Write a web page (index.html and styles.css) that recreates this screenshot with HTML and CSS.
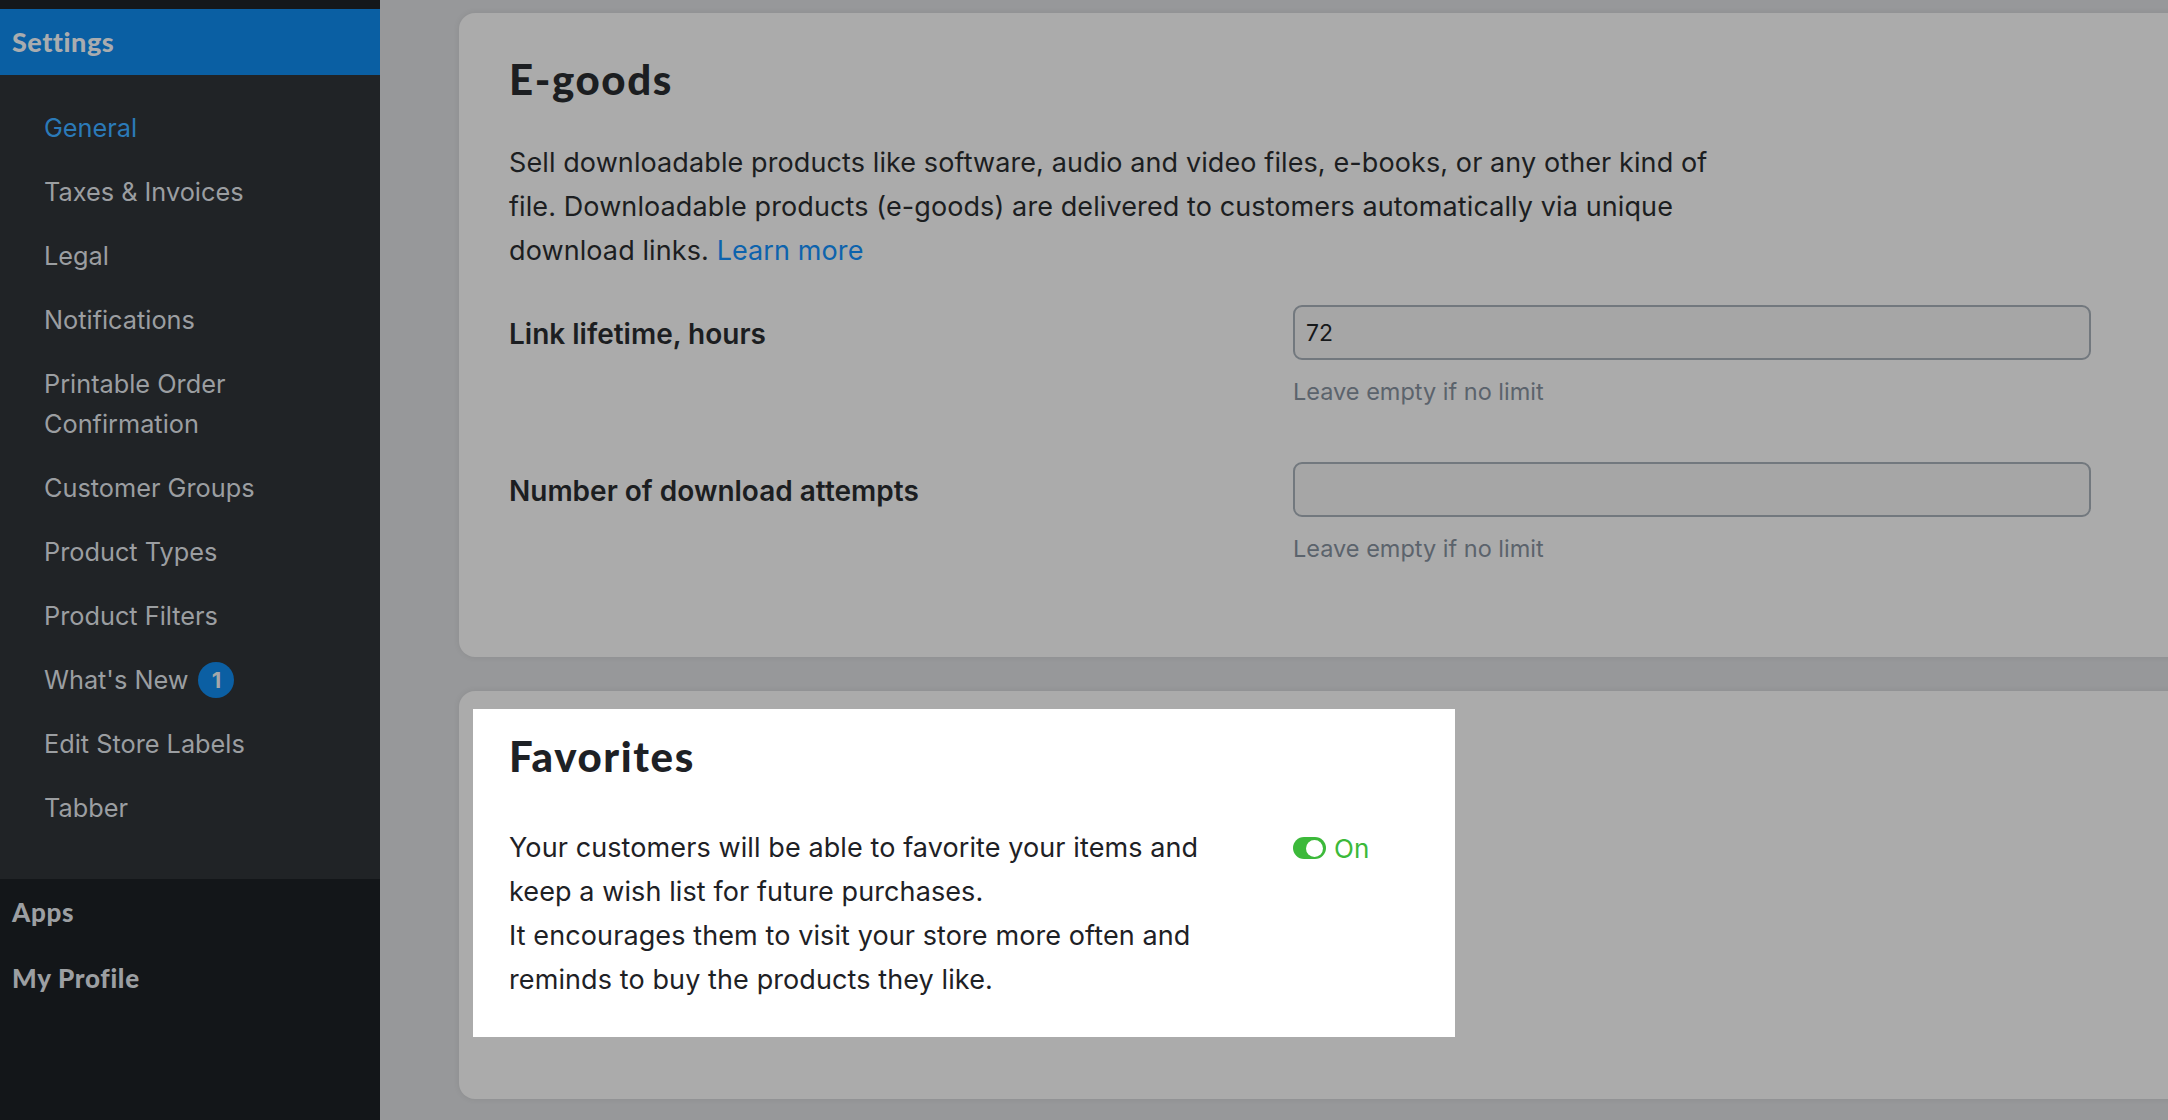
FILE: index.html
```html
<!DOCTYPE html>
<html lang="en">
<head>
<meta charset="utf-8">
<title>Settings – E-goods</title>
<link rel="stylesheet" href="styles.css">
</head>
<body>
<div class="app">
  <aside class="sidebar">
    <div class="topbar"></div>
    <div class="section-head">Settings</div>
    <ul class="submenu">
      <li class="active">General</li>
      <li>Taxes &amp; Invoices</li>
      <li>Legal</li>
      <li>Notifications</li>
      <li>Printable Order<br>Confirmation</li>
      <li>Customer Groups</li>
      <li>Product Types</li>
      <li>Product Filters</li>
      <li>What's New <span class="badge">1</span></li>
      <li>Edit Store Labels</li>
      <li>Tabber</li>
    </ul>
    <ul class="mainmenu">
      <li>Apps</li>
      <li>My Profile</li>
    </ul>
  </aside>
  <main class="content">
    <section class="card">
      <h2 class="card-title">E-goods</h2>
      <p class="desc">Sell downloadable products like software, audio and video files, e-books, or any other kind of<br>file. Downloadable products (e-goods) are delivered to customers automatically via unique<br>download links. <a class="link" href="#">Learn more</a></p>
      <div class="field">
        <label class="field-label">Link lifetime, hours</label>
        <div class="field-control">
          <div class="input">72</div>
          <div class="hint">Leave empty if no limit</div>
        </div>
      </div>
      <div class="field field-second">
        <label class="field-label">Number of download attempts</label>
        <div class="field-control">
          <div class="input"></div>
          <div class="hint">Leave empty if no limit</div>
        </div>
      </div>
    </section>
    <section class="card card-fav">
      <div class="spotlight">
        <h2 class="card-title">Favorites</h2>
        <div class="fav-row">
          <p class="fav-text">Your customers will be able to favorite your items and<br>keep a wish list for future purchases.<br>It encourages them to visit your store more often and<br>reminds to buy the products they like.</p>
          <div class="toggle-wrap">
            <span class="toggle"><span class="knob"></span></span>
            <span class="toggle-label">On</span>
          </div>
        </div>
      </div>
    </section>
  </main>
</div>
</body>
</html>
```
FILE: styles.css
```css
* { box-sizing: border-box; }
html, body { margin: 0; padding: 0; }
body {
  width: 2168px;
  height: 1120px;
  overflow: hidden;
  font-family: Inter, "Noto Sans", sans-serif;
  background: #97989a;
}
.app { display: flex; height: 1120px; }

/* Sidebar */
.sidebar {
  width: 380px;
  flex: none;
  display: flex;
  flex-direction: column;
  background: #131619;
}
.topbar { height: 9px; background: #14171a; }
.section-head {
  height: 66px;
  background: #0a5fa3;
  color: #a9acaf;
  font-family: Lato, sans-serif;
  font-weight: 900;
  font-size: 27px;
  letter-spacing: 0.5px;
  display: flex;
  align-items: center;
  padding-left: 12px;
  padding-bottom: 2px;
}
.submenu {
  list-style: none;
  margin: 0;
  padding: 21px 0 39px 44px;
  background: #202326;
}
.submenu li {
  color: #9b9ea1;
  font-size: 25.3px;
  line-height: 40px;
  padding: 12px 0;
  display: flex;
  align-items: center;
}
.submenu li.active { color: #2b7ab8; }
.badge {
  display: inline-flex;
  align-items: center;
  justify-content: center;
  width: 36px;
  height: 36px;
  margin-left: 10px;
  border-radius: 50%;
  background: #0b5fa3;
  color: #a4a7aa;
  font-weight: 700;
  font-size: 22px;
}
.mainmenu {
  list-style: none;
  margin: 0;
  padding: 0 0 0 12px;
  flex: 1;
}
.mainmenu li {
  height: 66px;
  display: flex;
  align-items: center;
  color: #9c9fa2;
  font-family: Lato, sans-serif;
  font-weight: 900;
  font-size: 26px;
  letter-spacing: 0.7px;
}

/* Content */
.content {
  flex: 1;
  overflow: hidden;
  padding: 13px 0 0 79px;
}
.card {
  background: #ababab;
  border-radius: 16px 0 0 16px;
  margin-right: -40px;
  padding: 42px 0 93px 50px;
  box-shadow: 0 0 6px rgba(0, 0, 0, 0.08);
}
.card-title {
  margin: 0;
  font-family: Lato, sans-serif;
  font-weight: 900;
  font-size: 42px;
  line-height: 49px;
  letter-spacing: 1.6px;
  color: #1c1e21;
}
.desc {
  margin: 37px 0 0;
  font-size: 27px;
  letter-spacing: 0.1px;
  line-height: 44px;
  color: #1c1e21;
}
.link { color: #0d63ad; text-decoration: none; }

.field {
  display: grid;
  grid-template-columns: 784px 798px;
  margin-top: 32px;
}
.field-second { margin-top: 55px; }
.field-label {
  font-size: 28px;
  font-weight: 600;
  color: #1c1e21;
  line-height: 58px;
}
.input {
  height: 55px;
  border: 2px solid #72787e;
  border-radius: 9px;
  background: #a6a6a6;
  font-size: 23px;
  color: #17191b;
  display: flex;
  align-items: center;
  padding-left: 11px;
}
.hint {
  margin-top: 17px;
  font-size: 23.5px;
  line-height: 30px;
  color: #5b636c;
}

.card-fav {
  margin-top: 34px;
  padding: 18px 0 62px 14px;
}
.spotlight {
  width: 982px;
  background: #ffffff;
  padding: 23px 36px 35px;
}
.spotlight .card-title { color: #1e2125; }
.fav-row {
  display: grid;
  grid-template-columns: 784px 1fr;
  margin-top: 45px;
}
.fav-text {
  margin: 0;
  font-size: 27px;
  letter-spacing: 0.1px;
  line-height: 44px;
  color: #1e2125;
}
.toggle-wrap {
  display: flex;
  align-items: center;
  gap: 8px;
  height: 44px;
}
.toggle {
  width: 33px;
  height: 22px;
  border-radius: 11px;
  background: #3cb93a;
  position: relative;
  display: inline-block;
  flex: none;
}
.knob {
  position: absolute;
  right: 3px;
  top: 2.5px;
  width: 17px;
  height: 17px;
  border-radius: 50%;
  background: #ffffff;
}
.toggle-label {
  color: #3cb93a;
  font-size: 26px;
}
```
